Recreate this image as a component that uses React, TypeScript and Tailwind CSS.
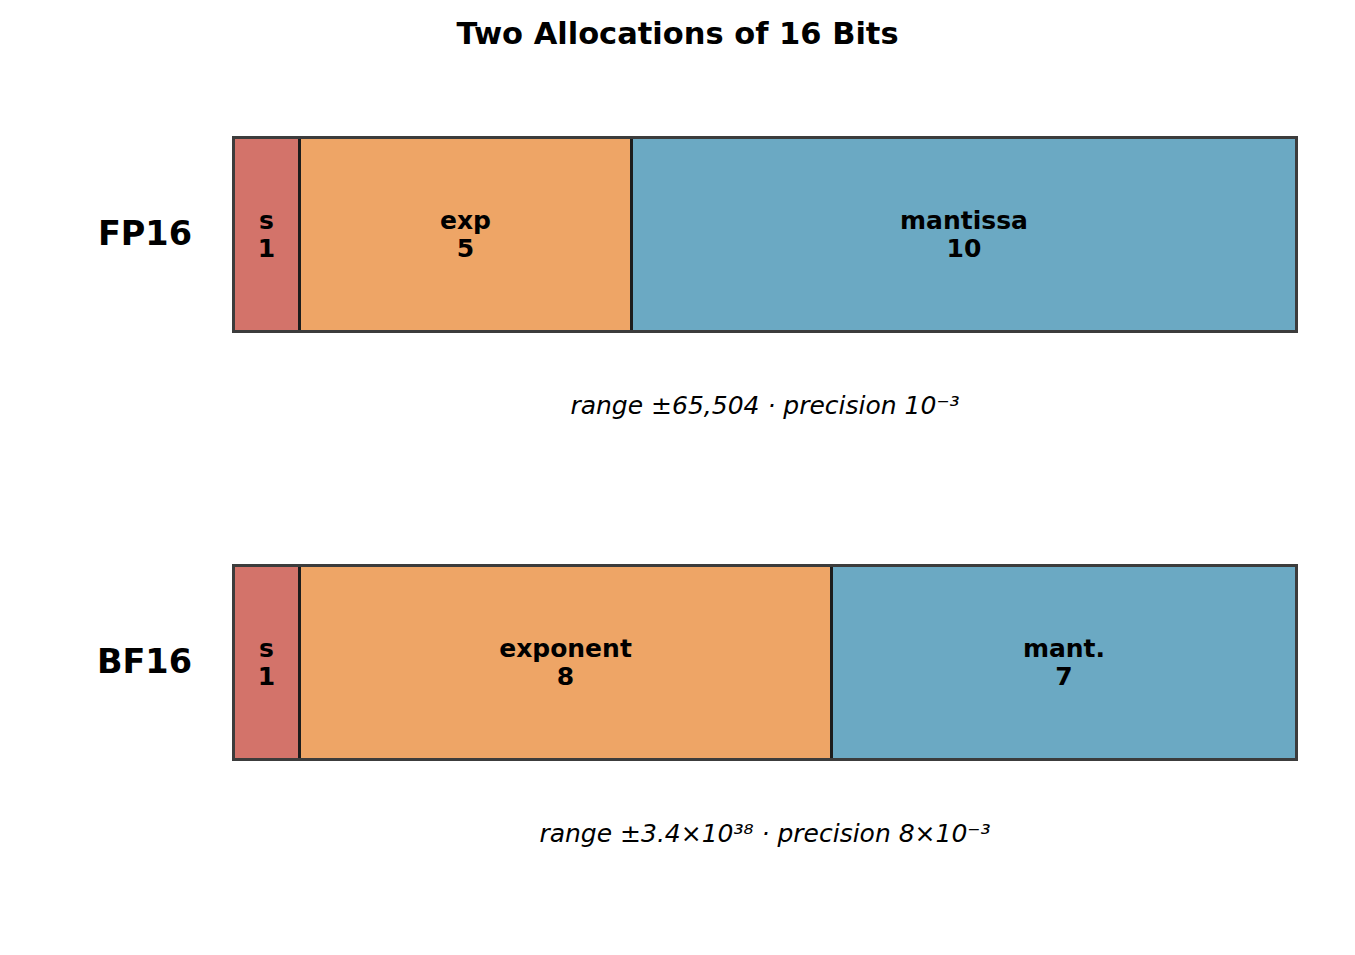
import React from 'react';

type Seg = { label: string; bits: number; color: string; width?: string };

const rows: { name: string; segs: Seg[]; caption: React.ReactNode }[] = [
  {
    name: 'FP16',
    segs: [
      { label: 's', bits: 1, color: 'bg-[#d3736a]', width: 'w-[63px]' },
      { label: 'exp', bits: 5, color: 'bg-[#eea566]', width: 'w-[332px]' },
      { label: 'mantissa', bits: 10, color: 'bg-[#6ba9c3]' },
    ],
    caption: <>range ±65,504 · precision 10⁻³</>,
  },
  {
    name: 'BF16',
    segs: [
      { label: 's', bits: 1, color: 'bg-[#d3736a]', width: 'w-[63px]' },
      { label: 'exponent', bits: 8, color: 'bg-[#eea566]', width: 'w-[532px]' },
      { label: 'mant.', bits: 7, color: 'bg-[#6ba9c3]' },
    ],
    caption: <>range ±3.4×10³⁸ · precision 8×10⁻³</>,
  },
];

function Bar({ segs }: { segs: Seg[] }) {
  return (
    <div className="flex w-[1066px] h-[197px] border-[3px] border-[#3c3c3c]">
      {segs.map((s, i) => (
        <div
          key={s.label}
          className={`${s.color} ${s.width ?? 'flex-1'} ${i > 0 ? 'border-l-[3px] border-[#1c1c1c]' : ''} flex flex-col items-center justify-center text-[25px] leading-[28px] font-bold text-black`}
        >
          <span>{s.label}</span>
          <span>{s.bits}</span>
        </div>
      ))}
    </div>
  );
}

export default function App() {
  return (
    <div
      className="w-[1355px] h-[955px] bg-white text-black"
      style={{ fontFamily: '"DejaVu Sans", sans-serif' }}
    >
      <h1 className="pt-[14px] text-center text-[30.5px] leading-[40px] font-bold">
        Two Allocations of 16 Bits
      </h1>
      <div className="flex flex-col gap-[143px] mt-[82px]">
        {rows.map((r) => (
          <div key={r.name} className="flex flex-col">
            <div className="flex items-center">
              <div className="w-[232px] pr-[40px] text-right text-[33.5px] font-bold">{r.name}</div>
              <Bar segs={r.segs} />
            </div>
            <div className="ml-[232px] w-[1066px] mt-[58px] text-center italic text-[25px] leading-[30px]">
              {r.caption}
            </div>
          </div>
        ))}
      </div>
    </div>
  );
}
